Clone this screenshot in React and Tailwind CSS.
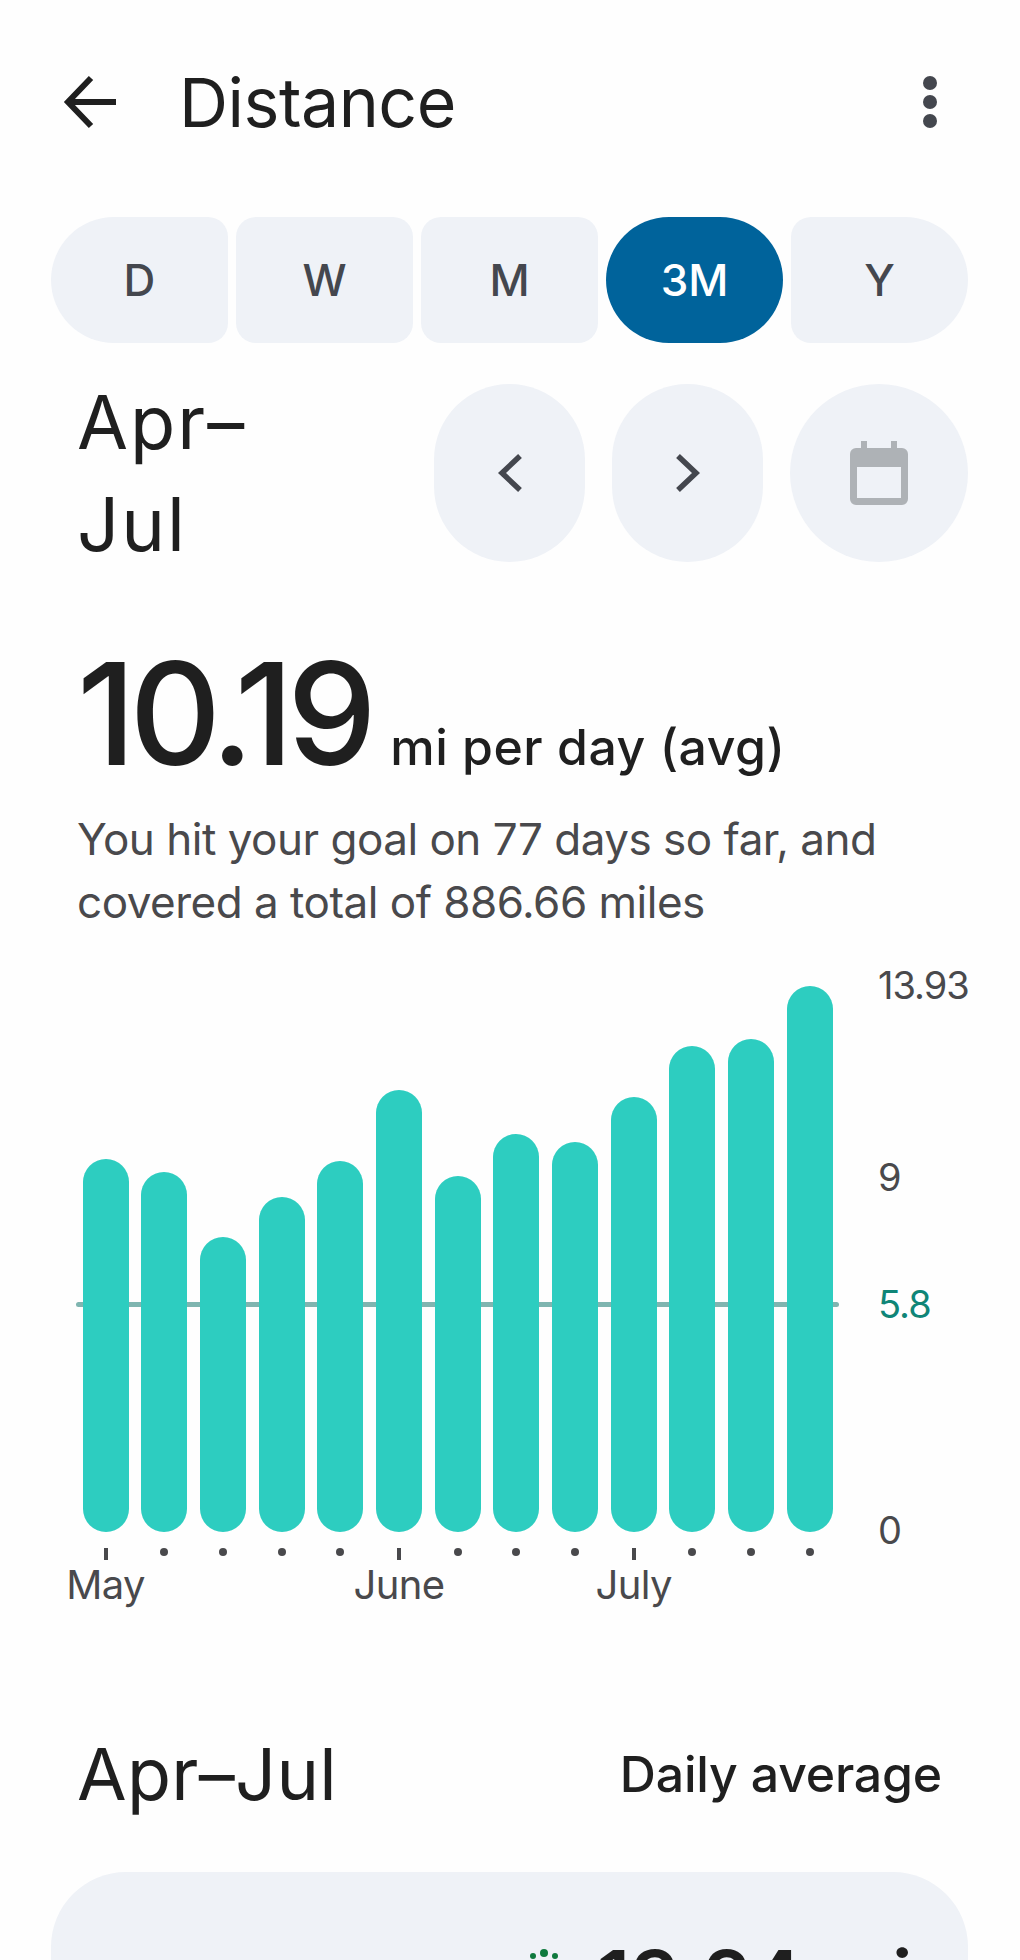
const font = { fontFamily: '"Inter", "Liberation Sans", sans-serif' };

const bars = [373, 360, 295, 335, 371, 442, 356, 398, 390, 435, 486, 493, 546];
const months = { 0: "May", 5: "June", 9: "July" };

function Tab({ label, className }) {
  return (
    <div className={`flex h-[126px] flex-1 items-center justify-center text-[44px] font-medium ${className}`}>
      {label}
    </div>
  );
}

export default function App() {
  return (
    <div style={font} className="h-[1960px] w-[1020px] overflow-hidden bg-[#fefefe] text-[#1f1f1f]">
      {/* Header */}
      <div className="flex h-[204px] items-center pl-[63px] pr-[83px]">
        <svg width="56" height="56" viewBox="0 0 56 56" fill="none" stroke="#1f1f1f" strokeWidth="6" className="shrink-0">
          <path d="M53 28H6M28 4L5 28l23 24" />
        </svg>
        <div className="ml-[60px] flex-1 text-[68px] leading-none tracking-[-0.5px]">Distance</div>
        <div className="flex flex-col gap-[5px]">
          <div className="h-[14px] w-[14px] rounded-full bg-[#44474e]" />
          <div className="h-[14px] w-[14px] rounded-full bg-[#44474e]" />
          <div className="h-[14px] w-[14px] rounded-full bg-[#44474e]" />
        </div>
      </div>

      {/* Range tabs */}
      <div className="mt-[13px] ml-[51px] flex w-[917px] gap-[8px]">
        <Tab label="D" className="rounded-l-[63px] rounded-r-[20px] bg-[#eff2f7] text-[#44474e]" />
        <Tab label="W" className="rounded-[20px] bg-[#eff2f7] text-[#44474e]" />
        <Tab label="M" className="rounded-[20px] bg-[#eff2f7] text-[#44474e]" />
        <Tab label="3M" className="rounded-[63px] bg-[#00639b] text-white" />
        <Tab label="Y" className="rounded-l-[20px] rounded-r-[63px] bg-[#eff2f7] text-[#44474e]" />
      </div>

      {/* Period row */}
      <div className="mt-[41px] ml-[77px] flex h-[178px] w-[891px] items-center">
        <div className="w-[357px] text-[74px] leading-[102px] tracking-[2px]">
          Apr–
          <br />
          Jul
        </div>
        <div className="flex h-[178px] w-[151px] items-center justify-center rounded-full bg-[#eff2f7]">
          <svg width="28" height="40" viewBox="0 0 28 40" fill="none" stroke="#44474e" strokeWidth="5.5">
            <path d="M24 3L6 20l18 17" />
          </svg>
        </div>
        <div className="ml-[27px] flex h-[178px] w-[151px] items-center justify-center rounded-full bg-[#eff2f7]">
          <svg width="28" height="40" viewBox="0 0 28 40" fill="none" stroke="#44474e" strokeWidth="5.5">
            <path d="M4 3l18 17L4 37" />
          </svg>
        </div>
        <div className="ml-[27px] flex h-[178px] w-[178px] items-center justify-center rounded-full bg-[#eff2f7]">
          <svg width="58" height="64" viewBox="0 0 58 64">
            <path
              fill="#aeb2b6"
              fillRule="evenodd"
              d="M11 0h6v7h24V0h6v7h5a6 6 0 0 1 6 6v45a6 6 0 0 1-6 6H6a6 6 0 0 1-6-6V13a6 6 0 0 1 6-6h5zM7 26v31h44V26z"
            />
          </svg>
        </div>
      </div>

      {/* Summary */}
      <div className="mt-[78px] ml-[77px] flex items-baseline">
        <span className="text-[142px] font-medium leading-[146px] tracking-[-6.5px]">10.19</span>
        <span className="ml-[20px] text-[50px] font-medium leading-[60px] tracking-[0.5px]">mi per day (avg)</span>
      </div>
      <div className="mt-[22px] ml-[77px] w-[900px] text-[44px] leading-[63px] tracking-[-0.5px] text-[#49494c]">
        You hit your goal on 77 days so far, and
        <br />
        covered a total of 886.66 miles
      </div>

      {/* Chart */}
      <div className="mt-[31px] ml-[76px] flex">
        <div className="w-[802px]">
          <div className="relative flex h-[567px] w-[763px] items-end gap-[12.7px] pl-[6.5px]">
            <div className="absolute left-0 top-[337px] h-[5px] w-[763px] rounded-full bg-[#7fb5b0]" />
            {bars.map((h, i) => (
              <div
                key={i}
                style={{ height: h }}
                className="relative w-[46px] rounded-[23px] bg-[#2dcdc0]"
              />
            ))}
          </div>
          <div className="mt-[16px] flex w-[763px] gap-[12.7px] pl-[6.5px]">
            {bars.map((_, i) => (
              <div key={i} className="flex h-[60px] w-[46px] flex-col items-center">
                {months[i] ? (
                  <>
                    <div className="h-[12px] w-[4px] bg-[#49494c]" />
                    <div className="mt-[3px] whitespace-nowrap text-[40px] leading-[44px] tracking-[-0.6px] text-[#49494c]">
                      {months[i]}
                    </div>
                  </>
                ) : (
                  <div className="h-[8px] w-[8px] rounded-full bg-[#49494c]" />
                )}
              </div>
            ))}
          </div>
        </div>
        <div className="text-[38px] leading-[40px] tracking-[-1px] text-[#49494c]">
          <div>13.93</div>
          <div className="mt-[152px]">9</div>
          <div className="mt-[87px] text-[#0f8577]">5.8</div>
          <div className="mt-[186px]">0</div>
        </div>
      </div>

      {/* Breakdown heading */}
      <div className="mt-[126px] ml-[77px] flex h-[80px] w-[865px] items-center justify-between">
        <span className="text-[72px] leading-[80px] tracking-[0.3px]">Apr–Jul</span>
        <span className="text-[50px] font-medium leading-[60px] tracking-[-0.2px]">Daily average</span>
      </div>

      {/* Card */}
      <div className="mt-[58px] ml-[51px] h-[300px] w-[917px] rounded-[75px] bg-[#eff2f7] pt-[57px] pl-[476px]">
        <div className="flex items-baseline">
          <svg width="34" height="34" viewBox="0 0 34 34" className="mr-[36px] mt-[18px] shrink-0 self-start" fill="#0f7a3e">
            <circle cx="17" cy="6" r="4" />
            <circle cx="6" cy="9" r="3" />
            <circle cx="28" cy="9" r="3" />
          </svg>
          <span className="text-[78px] font-semibold leading-[100px]">13.24 mi</span>
        </div>
      </div>
    </div>
  );
}
